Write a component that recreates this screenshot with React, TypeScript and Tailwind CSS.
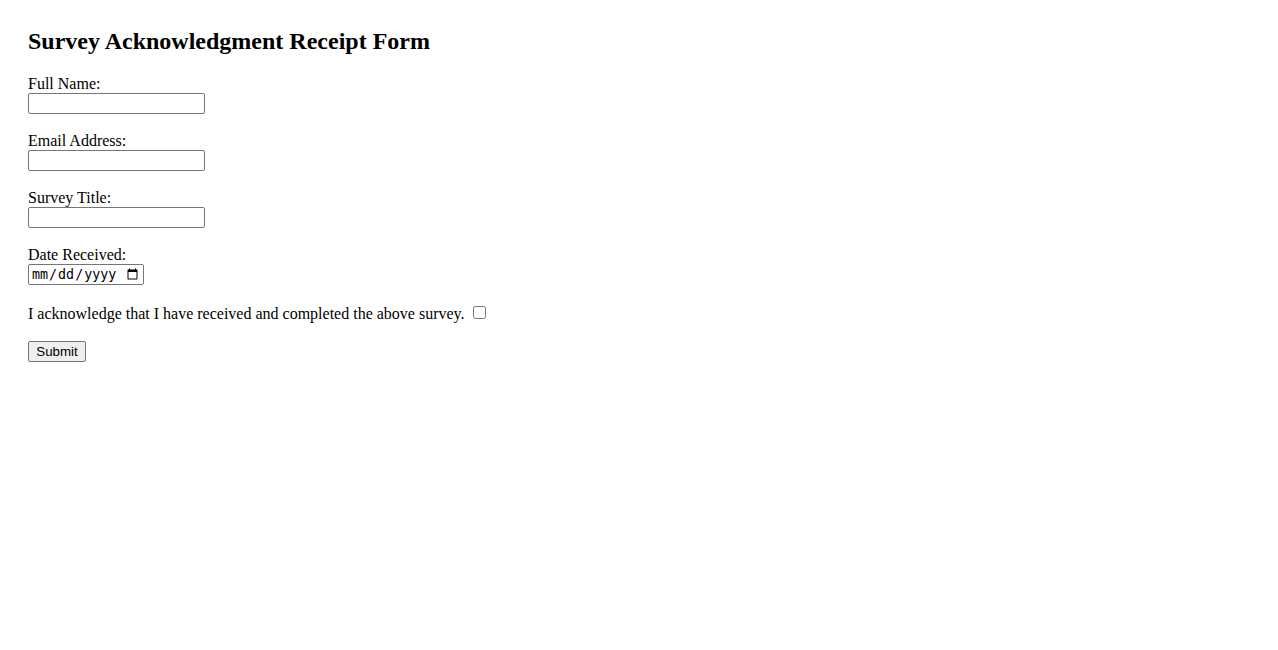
const fields = [
  { id: "fullName", label: "Full Name:", type: "text" },
  { id: "email", label: "Email Address:", type: "email" },
  { id: "surveyTitle", label: "Survey Title:", type: "text" },
];

export default function App() {
  return (
    <div className="min-h-screen bg-white px-[28px] pt-[28px] font-['Liberation_Serif',serif] text-[16px] text-black">
      <h2 className="mb-[20px] text-[24px] font-bold leading-[26.6px]">
        Survey Acknowledgment Receipt Form
      </h2>
      <form className="flex flex-col items-start" onSubmit={(e) => e.preventDefault()}>
        {fields.map((field) => (
          <div key={field.id} className="mb-[17.6px] flex flex-col items-start">
            <label htmlFor={field.id} className="leading-[18.4px]">
              {field.label}
            </label>
            <input
              id={field.id}
              name={field.id}
              type={field.type}
              className="h-[21px] w-[177px] rounded-[2px] border border-[#767676] bg-white px-[2px] font-['Liberation_Sans',sans-serif] text-[13.33px]"
            />
          </div>
        ))}
        <div className="flex flex-col items-start">
          <label htmlFor="dateReceived" className="leading-[18.4px]">
            Date Received:
          </label>
          <input
            id="dateReceived"
            name="dateReceived"
            type="date"
            className="h-[21px] w-[116px] rounded-[2px] border border-[#767676] bg-white px-[2px] font-['DejaVu_Sans_Mono',monospace] text-[13.33px]"
          />
        </div>
        <p className="mt-[20.3px] leading-[18.4px]">
          I acknowledge that I have received and completed the above survey.{" "}
          <input
            type="checkbox"
            name="acknowledge"
            className="relative top-[-2px] mb-[3px] ml-[4px] mr-[3px] h-[13px] w-[13px] align-middle"
          />
        </p>
        <button
          type="submit"
          className="mt-[17px] h-[21px] w-[58px] rounded-[2px] border border-[#767676] bg-[#efefef] font-['Liberation_Sans',sans-serif] text-[13.33px] leading-none"
        >
          Submit
        </button>
      </form>
    </div>
  );
}
